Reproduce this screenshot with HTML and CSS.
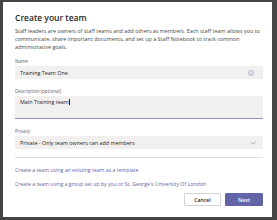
FILE: index.html
```html
<!DOCTYPE html>
<html>
<head>
<meta charset="utf-8">
<link rel="stylesheet" href="styles.css">
</head>
<body>
<div class="dialog">
  <h1 class="title">Create your team</h1>
  <p class="intro">Staff leaders are owners of staff teams and add others as members. Each staff team allows you to communicate, share important documents, and set up a Staff Notebook to track common administrative goals.</p>

  <div class="field">
    <div class="label">Name</div>
    <div class="input">
      <span>Training Team One</span>
      <svg class="check" viewBox="0 0 12 12" width="6" height="6"><circle cx="6" cy="6" r="5" fill="none" stroke="#8a8cc4" stroke-width="1.2"/><path d="M3.6 6.2 L5.3 7.8 L8.4 4.4" fill="none" stroke="#8a8cc4" stroke-width="1.2"/></svg>
    </div>
  </div>

  <div class="field">
    <div class="label">Description (optional)</div>
    <div class="textarea"><span>Main Training team</span><span class="caret"></span></div>
  </div>

  <div class="field">
    <div class="label">Privacy</div>
    <div class="input select">
      <span>Private - Only team owners can add members</span>
      <svg class="chev" viewBox="0 0 12 8" width="6" height="4"><path d="M1 1.5 L6 6.5 L11 1.5" fill="none" stroke="#777" stroke-width="1.2"/></svg>
    </div>
  </div>

  <div class="divider"></div>

  <div class="links">
    <a class="link">Create a team using an existing team as a template</a>
    <a class="link">Create a team using a group set up by you or St. George's University Of London</a>
  </div>

  <div class="actions">
    <button class="btn cancel">Cancel</button>
    <button class="btn next">Next</button>
  </div>
</div>
</body>
</html>
```

FILE: styles.css
```css
html, body {
  margin: 0;
  padding: 0;
}
body {
  background: #454545;
  width: 277px;
  height: 220px;
  overflow: hidden;
  font-family: "Open Sans", "Noto Sans", sans-serif;
}
.dialog {
  background: #fff;
  margin: 2px 5px 3px 3px;
  height: 215px;
  box-sizing: border-box;
  padding: 10px 9px 0 12px;
  display: flex;
  flex-direction: column;
}
.title {
  margin: 0;
  font-size: 8.5px;
  line-height: 11px;
  font-weight: 600;
  color: #252423;
}
.intro {
  margin: 4px 0 0 0;
  font-size: 5.4px;
  line-height: 8px;
  color: #484644;
}
.field {
  margin-top: 6.5px;
  display: flex;
  flex-direction: column;
}
.field + .field {
  margin-top: 8.5px;
}
.label {
  font-size: 4.6px;
  line-height: 6px;
  color: #605e5c;
  margin-bottom: 2.5px;
}
.input {
  height: 13px;
  background: #f1f0ef;
  display: flex;
  align-items: center;
  justify-content: space-between;
  padding: 0 9px 0 5px;
  font-size: 5.4px;
  color: #252423;
}
.textarea {
  height: 23px;
  box-sizing: border-box;
  background: #f1f0ef;
  border-bottom: 1.5px solid #8e8fc6;
  padding: 2px 5px 0 5px;
  font-size: 5.4px;
  line-height: 8px;
  color: #252423;
  display: flex;
  align-items: flex-start;
}
.caret {
  display: inline-block;
  width: 0.6px;
  height: 6px;
  margin-top: 1px;
  background: #252423;
}
.select {
  padding-right: 7px;
}
.divider {
  margin-top: 8px;
  height: 1px;
  background: #e1dfdd;
}
.links {
  margin-top: 8px;
  display: flex;
  flex-direction: column;
  gap: 5.5px;
}
.link {
  font-size: 5.2px;
  line-height: 8px;
  color: #6264a7;
}
.actions {
  margin-top: 5.5px;
  display: flex;
  justify-content: flex-end;
  gap: 4px;
}
.btn {
  height: 13px;
  padding: 0;
  font-family: inherit;
  font-size: 5.2px;
  font-weight: 600;
  border-radius: 1px;
}
.cancel {
  width: 37px;
  background: #fff;
  border: 1px solid #d6d4d2;
  color: #252423;
}
.next {
  width: 38px;
  background: #6264a7;
  border: 1px solid #6264a7;
  color: #fff;
}
```
